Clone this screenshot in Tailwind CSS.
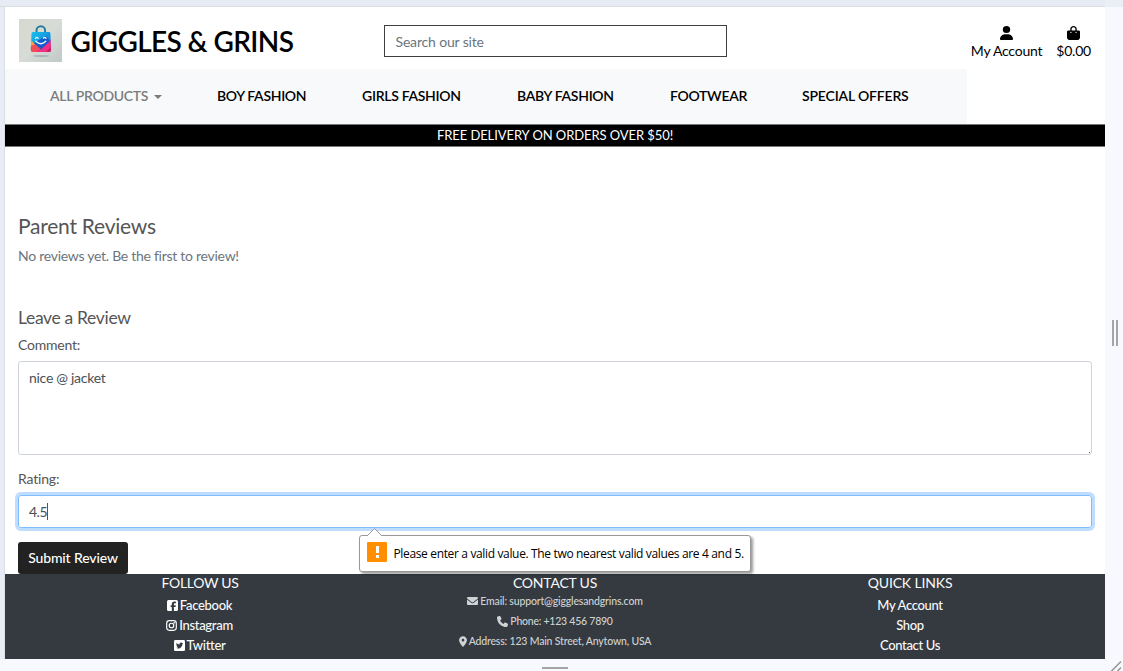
<!DOCTYPE html>
<html lang="en">
<head>
<meta charset="utf-8">
<title>Giggles &amp; Grins</title>
<script src="https://cdn.jsdelivr.net/npm/@tailwindcss/browser@4"></script>
</head>
<body class="relative h-[671px] w-[1123px] overflow-hidden bg-[#f8f9fe] font-['Lato',sans-serif] text-sm text-[#555] whitespace-nowrap">
<div class="h-[7px] bg-[#e9eef7]"><div class="h-full w-[1105px] border-b border-[#d9dde2] bg-[#e7ebf4]"></div></div>
<div class="flex h-[664px]">
  <div class="w-[5px] border-r border-[#dadee5] bg-[#e7ecf5] h-[652px]"></div>
  <div class="flex h-[652px] w-[1100px] flex-col bg-white">
    <!-- Header -->
    <header class="flex h-[62px] shrink-0 text-black">
      <div class="flex w-[379px] pt-[12px] pl-[14px]">
        <svg class="h-[43px] w-[43px]" viewBox="0 0 43 43">
          <defs>
            <linearGradient id="bg" x1="0" y1="0" x2="1" y2="1"><stop offset="0" stop-color="#d5d8cd"/><stop offset=".5" stop-color="#d8dcd7"/><stop offset="1" stop-color="#bfc9c8"/></linearGradient>
            <linearGradient id="bl" x1="0" y1="0" x2="1" y2="1"><stop offset="0" stop-color="#18c5ee"/><stop offset=".6" stop-color="#138fdf"/><stop offset="1" stop-color="#2456bd"/></linearGradient>
            <clipPath id="bag"><path d="M12.500 14.500Q12.500 13 14 13H30Q31.300 13 31.400 14.300L32 30.500Q32 33 29.800 33H14.200Q11.800 33 11.800 30.500Z"/></clipPath>
          </defs>
          <rect width="43" height="43" fill="url(#bg)"/>
          <ellipse cx="22" cy="37" rx="8" ry="1" fill="#8e9fa9" opacity=".6"/>
          <path d="M17.500 15V11.500a4.300 4.300 0 0 1 8.600 0V15" fill="none" stroke="#277b9d" stroke-width="2"/>
          <g clip-path="url(#bag)">
            <rect x="11" y="12" width="22" height="22" fill="url(#bl)"/>
            <path d="M11 20L24 34H11Z" fill="#f7a23b"/>
            <path d="M11 27L17 25 26 34H11Z" fill="#f04b57"/>
            <path d="M16 34L33 20V34Z" fill="#f02e86"/>
            <path d="M15 24L22 30.500 31 22 27 17Z" fill="#175bca"/>
            <path d="M26 34L33 27V34Z" fill="#c91c60"/>
          </g>
          <path d="M16.500 19.500q1.200-2 2.600-.3M24.500 19.200q1.300-1.800 2.600.1M16.800 22.300q5 4.800 10 0" fill="none" stroke="#e9faff" stroke-width="1.300" stroke-linecap="round"/>
        </svg>
        <h1 class="pt-[1px] pl-[8.5px] text-[28px] leading-[42px] font-semibold tracking-[-0.62px]">GIGGLES &amp; GRINS</h1>
      </div>
      <div class="mt-[18px] h-[32px] w-[343px] border border-[#3e3e3e] px-[10.5px] leading-[32px] tracking-[-0.16px] text-[#6c757d]">Search our site</div>
      <nav class="ml-auto flex gap-[14px] pt-[19px] pr-[14px]">
        <a class="flex flex-col items-center">
          <svg class="h-[14px] w-[13px]" viewBox="0 0 448 512" preserveAspectRatio="none"><path d="M224 256A128 128 0 1 0 224 0a128 128 0 1 0 0 256zm-45.700 48C79.800 304 0 383.800 0 482.300 0 498.700 13.300 512 29.700 512h388.600c16.400 0 29.700-13.300 29.700-29.700C448 383.800 368.200 304 269.700 304z"/></svg>
          <span class="leading-[22px] tracking-[-0.22px]">My Account</span>
        </a>
        <a class="flex flex-col items-center">
          <svg class="h-[14px] w-[13px]" viewBox="0 0 448 512" preserveAspectRatio="none"><path d="M160 112c0-35.300 28.700-64 64-64s64 28.700 64 64v48H160zm-48 48H48c-26.500 0-48 21.500-48 48v208c0 53 43 96 96 96h256c53 0 96-43 96-96V208c0-26.500-21.500-48-48-48h-64v-48C336 50.100 285.900 0 224 0S112 50.100 112 112zm24 48a24 24 0 1 1 0 48 24 24 0 1 1 0-48m176 0a24 24 0 1 1 0 48 24 24 0 1 1 0-48" fill-rule="evenodd"/></svg>
          <span class="leading-[22px] tracking-[-0.22px]">$0.00</span>
        </a>
      </nav>
    </header>
    <!-- Category navigation -->
    <nav class="flex h-[55px] w-[962px] shrink-0 items-start bg-[#f8f9fb] pl-[45px] leading-[54px] font-semibold text-black">
      <a class="flex w-[167px] items-center gap-[6px] tracking-[-0.33px] text-[#7c7c7c]">ALL PRODUCTS<span class="mt-[2px] border-x-4 border-t-4 border-x-transparent border-t-[#7c7c7c]"></span></a>
      <a class="w-[145px] tracking-[-0.33px]">BOY FASHION</a>
      <a class="w-[155px] tracking-[-0.3px]">GIRLS FASHION</a>
      <a class="w-[153px] tracking-[-0.3px]">BABY FASHION</a>
      <a class="w-[132px] tracking-[-0.3px]">FOOTWEAR</a>
      <a class="tracking-[-0.17px]">SPECIAL OFFERS</a>
    </nav>
    <div class="h-[23px] shrink-0 border-y border-y-[#777] bg-black text-center text-[13px] leading-[20px] tracking-[-0.08px] text-white">FREE DELIVERY ON ORDERS OVER $50!</div>
    <!-- Reviews -->
    <main class="flex h-[427px] shrink-0 flex-col px-[13px] pt-[65px]">
      <h2 class="text-[21px] leading-[28px] tracking-[-0.24px]">Parent Reviews</h2>
      <p class="mt-[5px] leading-[22px] tracking-[-0.27px] text-[#6c757d]">No reviews yet. Be the first to review!</p>
      <h3 class="mt-[40px] text-[17.5px] leading-[22px] tracking-[-0.34px]">Leave a Review</h3>
      <label class="mt-[5px] leading-[22px] tracking-[-0.22px]">Comment:</label>
      <div class="relative mt-[5px] h-[94px] w-[1074px] shrink-0 rounded-[3px] border border-[#ced4da] px-[10px] pt-[5px] leading-[22px] tracking-[-0.28px] text-[#495057]">nice @ jacket<span class="absolute right-px bottom-px size-px bg-[#666]"></span></div>
      <label class="mt-[13px] leading-[22px] tracking-[-0.18px]">Rating:</label>
      <div class="mt-[5px] flex h-[33px] w-[1074px] shrink-0 items-center rounded-[3px] border border-[#80bdff] px-[10px] text-[#495057] shadow-[0_0_0_3px_#bfdeff]"><span class="tracking-[-0.5px]">4.5</span><span class="h-[17px] w-px bg-[#555]"></span></div>
      <button class="mt-[14px] h-[32px] w-[110px] shrink-0 rounded-[3px] bg-[#222] font-medium tracking-[-0.13px] text-white">Submit Review</button>
    </main>
    <!-- Footer -->
    <footer class="grid h-[85px] shrink-0 grid-cols-[390px_320px_390px] bg-[#343a40] text-center text-[#f8f9fa]">
      <section>
        <h4 class="leading-[18px] tracking-[-0.3px]">FOLLOW US</h4>
        <ul class="mt-[3px] pr-px text-[13px] leading-[20px] font-medium tracking-[-0.3px]">
          <li class="flex items-center justify-center gap-[2px]"><svg class="size-[11px]" viewBox="0 0 448 448" fill="#fff"><path fill-rule="evenodd" d="M64 0h320a64 64 0 0 1 64 64v320a64 64 0 0 1-64 64H281V282h66l12-70h-78v-27c0-38 15-53 54-53h28V68c-10-3-36-6-54-6-77 0-113 36-113 115v35h-48v70h48v166H64a64 64 0 0 1-64-64V64A64 64 0 0 1 64 0"/></svg>Facebook</li>
          <li class="flex items-center justify-center gap-[2px]"><svg class="size-[11px]" viewBox="0 0 24 24" fill="none" stroke="#fff" stroke-width="2.500"><rect x="1.500" y="1.500" width="21" height="21" rx="6"/><circle cx="12" cy="12" r="5"/><circle cx="18.200" cy="5.800" r=".6"/></svg>Instagram</li>
          <li class="flex items-center justify-center gap-[2px]"><svg class="size-[11px]" viewBox="0 0 24 24"><rect width="24" height="24" rx="3" fill="#fff"/><path d="M20 7.300a6 6 0 0 1-1.800.5 3.200 3.200 0 0 0 1.400-1.800 6 6 0 0 1-2 .8 3.200 3.200 0 0 0-5.500 2.900A9.200 9.200 0 0 1 5.400 6.400a3.200 3.200 0 0 0 1 4.300A3 3 0 0 1 5 10.300a3.200 3.200 0 0 0 2.500 3.200 3 3 0 0 1-1.400 0 3.200 3.200 0 0 0 3 2.300A6.500 6.500 0 0 1 4.300 17 9.200 9.200 0 0 0 18.400 9z" fill="#343a40"/></svg>Twitter</li>
        </ul>
      </section>
      <section>
        <h4 class="leading-[18px] tracking-[-0.2px]">CONTACT US</h4>
        <ul class="-mt-px text-[10.5px] leading-[20px] font-medium tracking-[-0.16px] text-[#d0d2d4]">
          <li class="flex items-center justify-center gap-[2px]"><svg class="h-[8px] w-[11px]" viewBox="0 0 11 8" fill="currentColor"><path d="M1 0h9a1 1 0 0 1 .6 1.800L6.100 5.200a1 1 0 0 1-1.200 0L.4 1.800A1 1 0 0 1 1 0M0 2.500l4.500 3.400a1.700 1.700 0 0 0 2 0L11 2.500V7a1 1 0 0 1-1 1H1a1 1 0 0 1-1-1z"/></svg>Email: support@gigglesandgrins.com</li>
          <li class="flex items-center justify-center gap-[2px] tracking-[-0.24px]"><svg class="size-[11px]" viewBox="0 0 512 512" fill="currentColor"><path d="M164.900 24.600c-7.700-18.600-28-28.500-47.400-23.200l-88 24C12.100 30.200 0 46 0 64c0 247.400 200.600 448 448 448 18 0 33.800-12.100 38.600-29.500l24-88c5.300-19.400-4.600-39.700-23.200-47.400l-96-40c-16.300-6.800-35.200-2.100-46.300 11.600L304.700 368C234.300 334.700 177.300 277.700 144 207.300l49.300-40.300c13.700-11.200 18.400-30 11.600-46.300z"/></svg>Phone: +123 456 7890</li>
          <li class="flex items-center justify-center gap-[2px] tracking-[-0.18px]"><svg class="h-[11px] w-[8px]" viewBox="0 0 384 512" fill="currentColor"><path fill-rule="evenodd" d="M215.700 499.200C267 435 384 279.400 384 192 384 86 298 0 192 0S0 86 0 192c0 87.400 117 243 168.300 307.200 12.300 15.300 35.100 15.300 47.400 0M192 128a64 64 0 1 1 0 128 64 64 0 1 1 0-128"/></svg>Address: 123 Main Street, Anytown, USA</li>
        </ul>
      </section>
      <section>
        <h4 class="leading-[18px] tracking-[-0.15px]">QUICK LINKS</h4>
        <ul class="mt-[3px] text-[13px] leading-[20px] font-medium tracking-[-0.34px]"><li>My Account</li><li>Shop</li><li>Contact Us</li></ul>
      </section>
    </footer>
  </div>
  <!-- Right resize handle -->
  <div class="flex w-[18px] gap-[2px] pt-[313px] pl-[7px]"><span class="h-[26px] w-[2px] bg-[#a5a5a5]"></span><span class="h-[26px] w-[2px] bg-[#a5a5a5]"></span></div>
</div>
<!-- Validation message -->
<div class="absolute top-[535px] left-[359px] flex h-[37px] w-[392px] items-center rounded-[3px] border border-[#999] bg-white pl-[7px] font-['Open_Sans',sans-serif] text-[12px] tracking-[-0.35px] text-black shadow-[2px_2px_3px_rgba(0,0,0,0.4)]">
  <svg class="absolute -top-[8px] left-[7px] h-[8px] w-[15px]" viewBox="0 0 15 8"><path d="M0 8L7.500.5 15 8" fill="#fff" stroke="#999"/></svg>
  <span class="mb-[3px] flex h-[20px] w-[20px] flex-col items-center gap-[2px] rounded-[1px] bg-[#ff8f00] pt-[4px]"><span class="h-[7px] w-[3px] bg-white"></span><span class="h-[3px] w-[3px] bg-white"></span></span>
  <span class="ml-[6.5px]">Please enter a valid value. The two nearest valid values are 4 and 5.</span>
</div>
<!-- Bottom resize handles -->
<div class="absolute top-[667px] left-[542px] h-[2px] w-[26px] bg-[#a5a5a5]"></div>
<svg class="absolute right-0 bottom-0 h-[10px] w-[13px]" viewBox="0 0 13 10"><path d="M1.500 10L11 .5M7.500 10L11 6.500" stroke="#999" stroke-width="1.600" fill="none"/></svg>
</body>
</html>
